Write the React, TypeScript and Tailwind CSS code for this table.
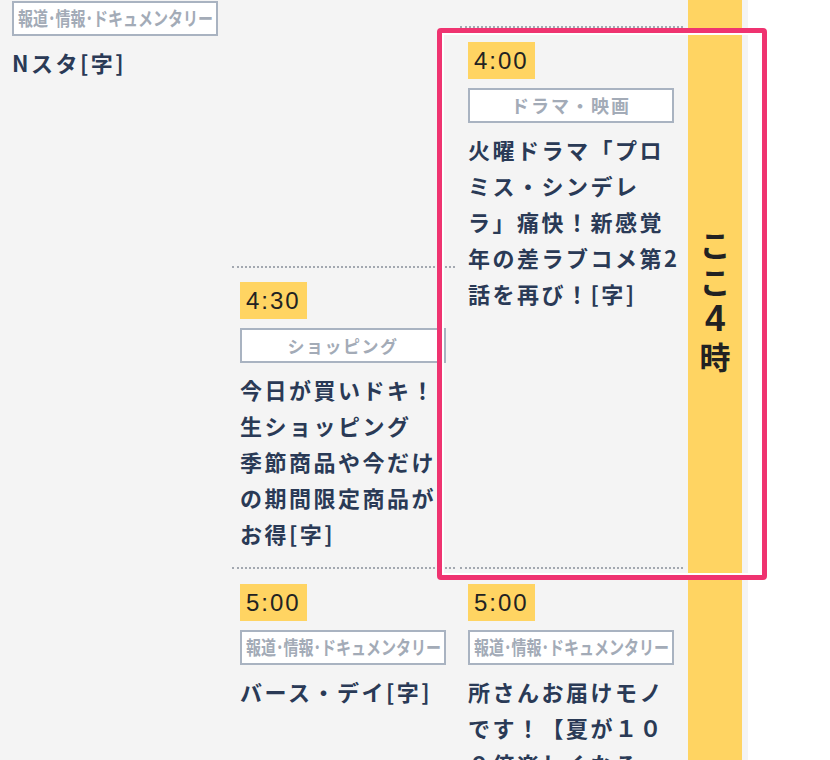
import React from "react";

const jp = { fontFamily: '"Noto Sans CJK JP", "Noto Sans", sans-serif' };
const num = { fontFamily: '"Liberation Sans", Arial, sans-serif' };

function Badge({ t }: { t: string }) {
  return (
    <div
      className="inline-flex h-[37px] items-center bg-[#ffd462] px-[6px] text-[24px] tracking-[2px] text-[#222]"
      style={num}
    >
      {t}
    </div>
  );
}

function Genre({ label, compress, cls }: { label: string; compress?: boolean; cls?: string }) {
  return (
    <div className="mt-[9px] flex h-[35px] w-[206px] items-center justify-center overflow-hidden border-2 border-[#a9b3c1] bg-white">
      {compress ? (
        <span
          className="shrink-0 whitespace-nowrap text-[19px] font-bold text-[#a3abb7] scale-x-[0.79]"
          style={jp}
        >
          {label}
        </span>
      ) : (
        <span className={"whitespace-nowrap font-bold text-[#a3abb7] " + (cls ?? "")} style={jp}>
          {label}
        </span>
      )}
    </div>
  );
}

function Title({ lines }: { lines: string[] }) {
  return (
    <div
      className="mt-[8px] whitespace-nowrap text-[22px] font-bold leading-[36px] tracking-[2.5px] text-[#2a3a56]"
      style={jp}
    >
      {lines.map((l, i) => (
        <div key={i}>{l}</div>
      ))}
    </div>
  );
}

const NEWS = "報道･情報･ドキュメンタリー";

export default function App() {
  return (
    <div className="relative h-[760px] w-full overflow-hidden bg-white">
      <div className="flex h-full w-[748px] gap-[5px] bg-[#f4f4f4] pl-[4px]">
        {/* column 1 */}
        <div className="w-[223px] shrink-0 pl-2 pt-[1px]">
          <div className="-mt-[9px]">
            <Genre label={NEWS} compress />
          </div>
          <Title lines={["Nスタ[字]"]} />
        </div>

        {/* column 2 */}
        <div className="flex w-[223px] shrink-0 flex-col">
          <div className="h-[266px] shrink-0" />
          <div className="h-[301px] shrink-0 border-t-2 border-dotted border-[#a3a8b0] pl-2 pt-[14px]">
            <Badge t="4:30" />
            <Genre label="ショッピング" cls="text-[17px] tracking-[1.5px]" />
            <Title
              lines={["今日が買いドキ！", "生ショッピング", "季節商品や今だけ", "の期間限定商品が", "お得[字]"]}
            />
          </div>
          <div className="flex-1 border-t-2 border-dotted border-[#a3a8b0] pl-2 pt-[15px]">
            <Badge t="5:00" />
            <Genre label={NEWS} compress />
            <Title lines={["バース・デイ[字]"]} />
          </div>
        </div>

        {/* column 3 */}
        <div className="flex w-[223px] shrink-0 flex-col">
          <div className="h-[26px] shrink-0" />
          <div className="h-[541px] shrink-0 border-t-2 border-dotted border-[#a3a8b0] pl-2 pt-[14px]">
            <Badge t="4:00" />
            <Genre label="ドラマ・映画" cls="text-[18px] tracking-[2px]" />
            <Title
              lines={["火曜ドラマ「プロ", "ミス・シンデレ", "ラ」痛快！新感覚", "年の差ラブコメ第2", "話を再び！[字]"]}
            />
          </div>
          <div className="flex-1 border-t-2 border-dotted border-[#a3a8b0] pl-2 pt-[15px]">
            <Badge t="5:00" />
            <Genre label={NEWS} compress />
            <Title lines={["所さんお届けモノ", "です！【夏が１０", "０倍楽しくなる"]} />
          </div>
        </div>

        {/* hour column */}
        <div className="flex w-[54px] shrink-0 flex-col items-center bg-[#ffd462] pt-[225px] text-[#222]">
          <div className="h-[37px] text-[31px] font-bold leading-[37px]" style={jp}>
            こ
          </div>
          <div className="h-[37px] text-[31px] font-bold leading-[37px]" style={jp}>
            こ
          </div>
          <div className="h-[40px] text-[36px] font-bold leading-[40px]" style={num}>
            4
          </div>
          <div className="h-[34px] text-[31px] font-bold leading-[34px]" style={jp}>
            時
          </div>
        </div>
      </div>

      {/* highlight frame */}
      <div className="pointer-events-none absolute left-[437px] top-[28px] h-[552px] w-[330px] rounded-[4px] border-[5px] border-[#ef3370] shadow-[inset_0_0_0_2px_#ffffff]" />
    </div>
  );
}
